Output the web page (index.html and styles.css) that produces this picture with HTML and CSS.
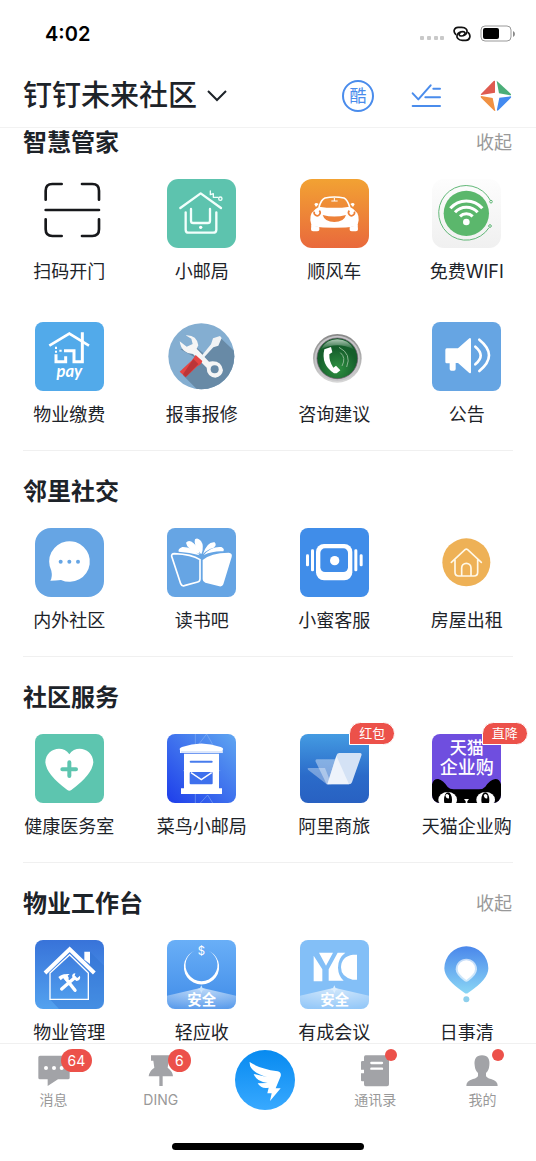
FILE: index.html
```html
<!DOCTYPE html>
<html lang="zh-CN">
<head>
    <meta charset="utf-8">
    <meta name="viewport" content="width=device-width, initial-scale=1.0">
    <title>钉钉未来社区</title>
    <link rel="stylesheet" href="styles.css">
</head>
<body>
<header class="header">
    <div class="statusBar">
        <span class="time">4:02</span>
        <svg class="signal" viewBox="0 0 25 16"><g fill="#c9c9c9"><rect x="0" y="10" width="4" height="4" rx="1"/><rect x="7" y="10" width="4" height="4" rx="1"/><rect x="14" y="10" width="4" height="4" rx="1"/><rect x="20" y="10" width="4" height="4" rx="1"/></g></svg>
        <svg class="chain" viewBox="0 0 54 48"><g fill="none" stroke="#111" stroke-width="5" stroke-linecap="round"><path d="M8 25C-1 16 4 4 15 4H26C38 4 45 12 41 21C38 28 33 30 25 30C18 30 16 24 21 21"/><path d="M46 20C55 29 50 43 39 43H28C16 43 9 34 13 26C16 19 22 17 30 17C37 17 38 23 33 26"/></g></svg>
        <svg class="battery" viewBox="0 0 36 18"><rect x="1" y="1" width="30" height="15" rx="4" fill="none" stroke="#999" stroke-width="1"/><rect x="3" y="3" width="16" height="11" rx="2"/><path d="M33 6Q35 7 35 9T33 12Z" fill="#888"/></svg>
    </div>
    <div class="titleBar">
        <button class="orgBtn" type="button">钉钉未来社区
            <svg class="arrow" viewBox="0 0 20 12"><path d="M1 1L10 10L19 1" fill="none" stroke="#1d2329" stroke-width="2"/></svg>
        </button>
        <nav class="tools">
            <a href="#ku" class="kuBtn">酷</a>
            <a href="#todo" aria-label="待办"><svg viewBox="0 0 96 96"><path d="M5 40L22 58L59 16M67 26H87M43 52H87M5 78H87" fill="none" stroke="#4a8cec" stroke-width="6" stroke-linecap="round" stroke-linejoin="round"/></svg></a>
            <a href="#discover" aria-label="发现"><svg viewBox="0 0 96 96"><path d="M45 2V38L4 45Q1 45 3 42L41 3Z" fill="#df5b50"/><path d="M50 2L92 41Q95 46 90 46L57 40Z" fill="#4bae78"/><path d="M4 48L38 54L46 92Q45 95 41 91L3 53Q0 49 4 48Z" fill="#f09143"/><path d="M58 53L92 49Q95 51 92 54L55 91Q50 95 51 88Z" fill="#438af0"/></svg></a>
        </nav>
    </div>
</header>

<main class="content">
    <section class="group">
        <div class="groupHead"><h2>智慧管家</h2><button type="button" class="foldBtn">收起</button></div>
        <div class="apps">
            <a class="app" href="#scan">
                <svg class="icon" viewBox="0 0 207 207"><path d="M32 62V35Q32 15 52 15H80M141 15H172Q192 15 192 35V62M32 121V151Q32 171 52 171H80M141 171H172Q192 171 192 151V121M32 93H192" fill="none" stroke="#17181b" stroke-width="8" stroke-linecap="round"/></svg>
                <span>扫码开门</span>
            </a>
            <a class="app" href="#post">
                <svg class="icon" viewBox="0 0 207 207"><rect width="207" height="207" rx="34" fill="#5dc3ae"/><g fill="none" stroke="#f2fffc" stroke-width="7" stroke-linecap="round" stroke-linejoin="round"><path d="M40 87L101 43L162 87"/><path d="M56 100V152Q56 161 65 161H138Q148 161 148 152V100M72 90V125Q72 132 79 132H122Q129 132 129 125V90"/><path d="M130 36V47L139 44V55L153 55" stroke-width="4"/><circle cx="160" cy="59" r="5" stroke-width="4"/></g><circle cx="101" cy="145" r="5" fill="#fff"/></svg>
                <span>小邮局</span>
            </a>
            <a class="app" href="#car">
                <svg class="icon" viewBox="0 0 207 207"><defs><linearGradient id="orange" x2="0" y2="1"><stop stop-color="#f2a233"/><stop offset="1" stop-color="#e9693c"/></linearGradient></defs><rect width="207" height="207" rx="36" fill="url(#orange)"/><path d="M57 84Q64 61 75 57Q103 51 132 57Q142 61 149 84" fill="none" stroke="#fff" stroke-width="5"/><path d="M103 57V66M94 66H113" stroke="#fff" stroke-width="3"/><g fill="#fff"><path d="M31 124Q28 98 57 83Q103 90 149 83Q179 98 176 124L172 142Q103 151 35 142Z"/><path d="M48 84L43 76Q47 69 56 75ZM159 84L164 76Q160 69 151 75Z"/><path d="M34 138L58 145V153Q57 157 51 157H39Q33 157 33 151ZM173 138L149 145V153Q150 157 156 157H168Q174 157 174 151Z"/></g><path d="M68 108Q103 117 138 108Q132 129 103 129Q74 129 68 108" fill="#ed8139"/><g fill="none" stroke="#ed8139" stroke-width="5"><path d="M43 98A9 9 0 1 0 58 95M148 95A9 9 0 1 0 163 98"/></g></svg>
                <span>顺风车</span>
            </a>
            <a class="app" href="#wifi">
                <svg class="icon" viewBox="0 0 207 207"><defs><linearGradient id="paper" x2="0" y2="1"><stop stop-color="#fdfdfd"/><stop offset="1" stop-color="#f0f0f0"/></linearGradient></defs><rect width="207" height="207" rx="36" fill="url(#paper)"/><g fill="none" stroke="#62b878" stroke-width="3"><path d="M175 64A82 82 0 1 0 171 146"/><circle cx="177" cy="68" r="4"/><circle cx="174" cy="141" r="4"/></g><circle cx="103" cy="103" r="68" fill="#5bb76c"/><path d="M55 88A63 63 0 0 1 151 88M69 100A45 45 0 0 1 137 100M84 112A27 27 0 0 1 122 112" fill="none" stroke="#fff" stroke-width="9"/><circle cx="103" cy="129" r="10" fill="#fff"/></svg>
                <span>免费WIFI</span>
            </a>
            <a class="app" href="#pay">
                <svg class="icon" viewBox="0 0 207 207"><rect width="207" height="207" rx="24" fill="#52aaea"/><g fill="none" stroke="#fff" stroke-width="8"><path d="M43 71L103 35L162 71"/><path d="M142 31V119H117V86H87" stroke-width="9"/><path d="M63 97V119H92V103" stroke-width="9"/><path d="M63 74V81M63 86V92M73 86H80" stroke-width="6"/></g><text class="payText" x="103" y="166">pay</text></svg>
                <span>物业缴费</span>
            </a>
            <a class="app" href="#repair">
                <svg class="icon" viewBox="0 0 207 207"><defs><clipPath id="disc"><circle cx="103" cy="103" r="99"/></clipPath></defs><g clip-path="url(#disc)"><rect width="207" height="207" fill="#84aed1"/><path d="M160 47L207 92V207H95L48 160L92 110L40 82L80 70L112 96Z" fill="#688aa6"/></g><path d="M56 40Q89 38 94 70L89 80L126 119Q163 113 168 145Q165 165 145 167Q119 163 119 137L78 96Q43 94 38 58L59 74L77 66L73 50Z" fill="#f5f5f5"/><circle cx="143" cy="142" r="12" fill="#688aa6"/><path d="M99 107L132 67L138 49L159 42L164 48L154 71L139 76L106 112Z" fill="#f1f3f4"/><path d="M86 99L106 117Q103 128 91 133L56 166L38 149L75 115Z" fill="#e44543"/><path d="M79 111L94 126L56 165L48 157Z" fill="#bb3538"/></svg>
                <span>报事报修</span>
            </a>
            <a class="app" href="#advice">
                <svg class="icon" viewBox="0 0 207 207"><defs><linearGradient id="silver" x2="0" y2="1"><stop stop-color="#888"/><stop offset="1" stop-color="#d8d8d8"/></linearGradient><radialGradient id="green" cy=".75"><stop stop-color="#2f9142"/><stop offset="1" stop-color="#155e2b"/></radialGradient><linearGradient id="gloss" x2="0" y2="1"><stop stop-color="#fff" stop-opacity=".65"/><stop offset="1" stop-color="#fff" stop-opacity=".05"/></linearGradient></defs><circle cx="112" cy="109" r="73" fill="url(#silver)"/><circle cx="112" cy="109" r="68" fill="#c6c5c8"/><circle cx="112" cy="109" r="61" fill="url(#green)" stroke="#656" stroke-width="2"/><path d="M63 82A55 55 0 0 1 161 82Q112 57 63 82" fill="url(#gloss)"/><path d="M82 79L93 75L97 91L88 97Q87 119 100 137L108 131L121 145L110 154H102Q62 128 73 82Z" fill="#fff"/><path d="M121 92Q139 107 126 132M117 76Q156 96 140 135" fill="none" stroke="#8bb692" stroke-width="3"/></svg>
                <span>咨询建议</span>
            </a>
            <a class="app" href="#notice">
                <svg class="icon" viewBox="0 0 207 207"><rect width="207" height="207" rx="24" fill="#66a5e3"/><path d="M44 79H78L112 49Q117 46 117 53V150Q117 157 111 152L78 123H71V141Q71 146 66 146H58Q53 146 53 141V124H44Q40 124 40 119V84Q40 79 44 79" fill="#fff"/><path d="M130 74Q162 101 130 127M142 53Q200 100 142 147" fill="none" stroke="#fff" stroke-width="8" stroke-linecap="round"/></svg>
                <span>公告</span>
            </a>
        </div>
    </section>

    <section class="group">
        <div class="groupHead"><h2>邻里社交</h2></div>
        <div class="apps">
            <a class="app" href="#community">
                <svg class="icon" viewBox="0 0 207 207"><rect width="207" height="207" rx="48" fill="#66a5e4"/><path d="M46 158Q53 146 49 128A61 61 0 1 1 78 156Q62 158 46 158" fill="#fff"/><g fill="#66a5e4"><circle cx="77" cy="101" r="6"/><circle cx="103" cy="101" r="6"/><circle cx="129" cy="101" r="6"/></g></svg>
                <span>内外社区</span>
            </a>
            <a class="app" href="#books">
                <svg class="icon" viewBox="0 0 207 207"><rect width="207" height="207" rx="24" fill="#66a5e4"/><path d="M14 85Q13 77 22 77Q74 79 99 95V153Q99 160 92 162L52 173Q44 175 41 167Z" fill="none" stroke="#fff" stroke-width="5"/><path d="M107 96Q130 75 185 74Q197 75 194 87L169 169Q166 177 157 175L115 164Q107 162 107 154Z" fill="#fff"/><g fill="#fff"><path d="M101 77Q78 51 84 34Q92 27 102 39Q112 53 104 77Z"/><path d="M98 78Q60 65 57 44Q66 33 80 46Q95 59 98 78"/><path d="M98 82Q73 56 46 57Q32 62 35 71Q68 73 98 82"/><path d="M108 78Q121 40 143 43Q151 52 139 60Q122 64 108 78"/><path d="M110 81Q133 54 163 57Q174 62 169 70Q140 68 110 81"/></g></svg>
                <span>读书吧</span>
            </a>
            <a class="app" href="#service">
                <svg class="icon" viewBox="0 0 207 207"><rect width="207" height="207" rx="24" fill="#408de9"/><rect x="48" y="48" width="109" height="109" rx="24" fill="#fff"/><rect x="61" y="61" width="83" height="71" rx="14" fill="#408de9"/><circle cx="104" cy="98" r="14" fill="#fff"/><g fill="#fff"><rect x="33" y="64" width="9" height="66" rx="4"/><rect x="18" y="79" width="9" height="36" rx="4"/><rect x="163" y="64" width="9" height="66" rx="4"/><rect x="179" y="79" width="9" height="36" rx="4"/></g></svg>
                <span>小蜜客服</span>
            </a>
            <a class="app" href="#rent">
                <svg class="icon" viewBox="0 0 207 207"><circle cx="103" cy="103" r="72" fill="#eeb156"/><path d="M58 103L99 65Q103 62 107 65L148 103M69 95V133Q69 144 80 144H126Q137 144 137 133V95M89 144V120A14 14 0 0 1 117 120V144" fill="none" stroke="#fff8e7" stroke-width="5" stroke-linecap="round"/></svg>
                <span>房屋出租</span>
            </a>
        </div>
    </section>

    <section class="group">
        <div class="groupHead"><h2>社区服务</h2></div>
        <div class="apps">
            <a class="app" href="#health">
                <svg class="icon" viewBox="0 0 207 207"><rect width="207" height="207" rx="24" fill="#5dc5af"/><path d="M97 168Q34 122 31 85C32 44 83 30 103 61C123 30 174 44 175 85Q172 122 109 168Q103 172 97 168" fill="#fff"/><path d="M103 85V126M82 106H123" stroke="#5dc5af" stroke-width="12" stroke-linecap="round"/></svg>
                <span>健康医务室</span>
            </a>
            <a class="app" href="#cainiao">
                <svg class="icon" viewBox="0 0 207 207"><defs><linearGradient id="blue" x1="0" y1="1" x2="1" y2="0"><stop stop-color="#1d3dea"/><stop offset="1" stop-color="#60a6f1"/></linearGradient></defs><rect width="207" height="207" rx="24" fill="url(#blue)"/><path d="M85 0V38M92 35L119 0L139 35M85 180V207M100 207L122 183L137 207M48 110H160" fill="none" stroke="#91b9f6" stroke-opacity=".5" stroke-width="3"/><g fill="#fff"><path d="M39 48Q35 43 45 39Q103 18 161 39Q172 43 167 48V57H39Z"/><path d="M51 59H156V163H165V180H42V163H51Z"/></g><path d="M42 54H165" stroke="#9cb8f3" stroke-width="2"/><path d="M71 83H134" stroke="#477ced" stroke-width="6" stroke-linecap="round"/><rect x="68" y="114" width="69" height="37" rx="3" fill="#3e70ed"/><path d="M72 116L103 137L134 116" fill="none" stroke="#fff" stroke-width="4"/></svg>
                <span>菜鸟小邮局</span>
            </a>
            <a class="app" href="#travel">
                <svg class="icon" viewBox="0 0 207 207"><defs><linearGradient id="sky" x2="0" y2="1"><stop stop-color="#449be2"/><stop offset=".6" stop-color="#2b6bc9"/><stop offset="1" stop-color="#2861c2"/></linearGradient></defs><rect width="207" height="207" rx="24" fill="url(#sky)"/><path d="M25 102H75L94 151H80L24 107Q21 103 25 102" fill="#fff" fill-opacity=".35"/><path d="M50 76H107L87 151H80L47 83Q45 77 50 76" fill="#fff" fill-opacity=".4"/><path d="M118 57H179Q187 57 184 65L156 145Q154 151 147 151H82L110 63Q112 57 118 57" fill="#d4e2f5"/><path d="M109 65L147 151H82Z" fill="#fff" fill-opacity=".6"/></svg>
                <span>阿里商旅</span>
                <em class="tag">红包</em>
            </a>
            <a class="app" href="#tmall">
                <svg class="icon" viewBox="0 0 207 207"><defs><clipPath id="tile"><rect width="207" height="207" rx="24"/></clipPath></defs><g clip-path="url(#tile)"><rect width="207" height="207" fill="#6f4edf"/><path d="M0 207V151Q4 134 19 135Q33 138 47 159Q53 166 65 166H141Q153 166 160 158Q174 137 190 135Q203 135 207 151V207Z" fill="#000"/><ellipse cx="47" cy="197" rx="28" ry="23" fill="#fff"/><ellipse cx="161" cy="197" rx="28" ry="23" fill="#fff"/><ellipse cx="48" cy="197" rx="12" ry="22"/><ellipse cx="160" cy="197" rx="12" ry="22"/><path d="M40 185Q43 175 51 184V193Q44 196 40 185M155 185Q158 175 166 184V193Q159 196 155 185M96 195H111L106 202V207H101V202Z" fill="#fff"/></g><text class="catText" x="104" y="59">天猫</text><text class="catText catSub" x="104" y="120">企业购</text></svg>
                <span>天猫企业购</span>
                <em class="tag">直降</em>
            </a>
        </div>
    </section>

    <section class="group">
        <div class="groupHead"><h2>物业工作台</h2><button type="button" class="foldBtn">收起</button></div>
        <div class="apps">
            <a class="app" href="#manage">
                <svg class="icon" viewBox="0 0 207 207"><defs><linearGradient id="deep" x2="0" y2="1"><stop stop-color="#3873d9"/><stop offset="1" stop-color="#53a2ef"/></linearGradient></defs><rect width="207" height="207" rx="24" fill="url(#deep)"/><path d="M165 35L207 77V183Q207 207 183 207H72L45 178L160 178Z" fill="#2f70d0" fill-opacity=".4"/><path d="M148 35H165V72L148 59Z" fill="#fff"/><path d="M30 99L104 28L178 99" fill="none" stroke="#fff" stroke-width="12"/><path d="M45 99V178H160V99L104 44Z" fill="none" stroke="#fff" stroke-width="4"/><path d="M80 147L119 113M87 109L120 151" stroke="#fff" stroke-width="10" stroke-linecap="round"/><path d="M70 111Q82 100 104 102L98 107L102 115L92 122L85 114L77 121ZM112 112Q109 101 121 100L119 109L127 114L135 107Q138 121 124 123Z" fill="#fff"/></svg>
                <span>物业管理</span>
            </a>
            <a class="app" href="#receivable">
                <svg class="icon" viewBox="0 0 207 207"><defs><linearGradient id="light" x2="0" y2="1"><stop stop-color="#69aff7"/><stop offset="1" stop-color="#418ce8"/></linearGradient><radialGradient id="fan" cy="0" r="1"><stop stop-color="#fff" stop-opacity=".65"/><stop offset="1" stop-color="#fff" stop-opacity=".15"/></radialGradient></defs><rect width="207" height="207" rx="24" fill="url(#light)"/><path d="M88 30A53 53 0 1 0 119 30A48 48 0 1 1 88 30" fill="#fff"/><text class="dollar" x="103" y="45">$</text><path d="M0 167L103 143L207 167V183Q207 207 183 207H24Q0 207 0 183Z" fill="url(#fan)"/><path d="M103 136L107 145L116 148L107 151L103 160L99 151L90 148L99 145Z" fill="#c9e3fc"/><text class="safe" x="104" y="194">安全</text></svg>
                <span>轻应收</span>
            </a>
            <a class="app" href="#meeting">
                <svg class="icon" viewBox="0 0 207 207"><rect width="207" height="207" rx="24" fill="#83bff7"/><path d="M41 47L67 88V124H41ZM57 38H99L78 77ZM86 88L113 38H136Q114 54 114 83Q115 108 131 122H86ZM171 44V119H158Q123 111 123 82Q124 49 159 44Z" fill="#fff"/><path d="M0 167L103 143L207 167V183Q207 207 183 207H24Q0 207 0 183Z" fill="url(#fan)"/><path d="M103 136L107 145L116 148L107 151L103 160L99 151L90 148L99 145Z" fill="#deeffe"/><text class="safe" x="104" y="194">安全</text></svg>
                <span>有成会议</span>
            </a>
            <a class="app" href="#daily">
                <svg class="icon" viewBox="0 0 207 207"><defs><linearGradient id="pin" x2="0" y2="1"><stop stop-color="#4a87eb"/><stop offset="1" stop-color="#8ad6f5"/></linearGradient></defs><path d="M97 158Q37 119 37 85A66 66 0 1 1 169 85Q169 119 109 158Q103 163 97 158" fill="url(#pin)"/><path d="M97 123Q71 104 71 88A32 32 0 1 1 135 88Q135 104 109 123Q103 127 97 123" fill="#fff" fill-opacity=".65"/><path d="M103 120Q77 102 77 87A26 26 0 1 1 129 87Q129 102 103 120" fill="#fff"/><circle cx="103" cy="178" r="9" fill="#8ecfec"/></svg>
                <span>日事清</span>
            </a>
        </div>
    </section>
</main>

<footer class="footer">
    <nav class="tabs">
        <a class="tab" href="#msg">
            <svg class="tabIcon" viewBox="0 0 96 96"><path d="M6 2H90Q95 2 95 7V68Q95 73 90 73H60L29 93V73H6Q1 73 1 68V7Q1 2 6 2" fill="#a2a3a7"/><g fill="#fff"><circle cx="24" cy="39" r="6"/><circle cx="48" cy="39" r="6"/><circle cx="71" cy="39" r="6"/></g></svg>
            <span>消息</span><b class="count">64</b>
        </a>
        <a class="tab" href="#ding">
            <svg class="tabIcon" viewBox="0 0 96 96"><path d="M18 1H78V17H71L68 38Q83 49 84 64H53V93H43V64H11Q13 47 28 38L25 17H18Z" fill="#a2a3a7"/></svg>
            <span>DING</span><b class="count">6</b>
        </a>
        <a class="tab" href="#work" aria-label="工作台">
            <svg class="dingIcon" viewBox="0 0 195 180"><defs><linearGradient id="ding" x2="0" y2="1"><stop stop-color="#078af0"/><stop offset="1" stop-color="#38a9ff"/></linearGradient></defs><circle cx="90" cy="90" r="90" fill="url(#ding)"/><path d="M44 36Q70 55 128 64Q140 67 137 79L122 115H137L105 153L110 130H97L101 113Q79 118 68 100L98 99Q65 96 56 72L96 81Q42 66 44 36" fill="#fff"/></svg>
        </a>
        <a class="tab" href="#contacts">
            <svg class="tabIcon" viewBox="0 0 96 96"><path d="M20 1H84Q90 1 90 7V88Q90 94 84 94H20Q15 94 15 88V79H9Q6 79 6 76V55H15V44H6V22Q6 18 10 18H15V7Q15 1 20 1" fill="#a2a3a7"/><path d="M37 24H69M37 41H69" stroke="#fff" stroke-width="7" stroke-linecap="round"/></svg>
            <span>通讯录</span><b class="dot"></b>
        </a>
        <a class="tab" href="#mine">
            <svg class="tabIcon" viewBox="0 0 96 96"><path d="M48 1C66 1 72 13 70 31Q69 46 60 54V62Q61 68 75 72Q96 78 95 93H1Q0 78 21 72Q35 68 36 62V54Q27 46 26 31C24 13 30 1 48 1" fill="#a2a3a7"/></svg>
            <span>我的</span><b class="dot"></b>
        </a>
    </nav>
    <div class="homeBar"></div>
</footer>
</body>
</html>
```
FILE: styles.css
```css
*{
    box-sizing: border-box;
}
body{
    margin: 0; height: 100vh;
    display: flex; flex-direction: column;
    background-color: #fff; color: #1d2329;
    font-family: Inter, "Noto Sans CJK SC", sans-serif;
}
a{
    color: inherit; text-decoration: none;
}
button{
    padding: 0; border: 0; background: none; font-family: inherit; cursor: pointer;
}
svg{
    display: block; flex: none;
}
.header{
    flex: none; border-bottom: 1px solid #f2f2f2;
}
.statusBar{
    height: 64px; padding: 4px 20px 0 45px;
    display: flex; align-items: center;
}
.time{
    margin-right: auto; font-size: 20px; font-weight: 600; color: #000;
}
.signal{
    width: 25px; height: 16px;
}
.chain{
    width: 18px; height: 16px; margin: 0 9px 0 8px;
}
.battery{
    width: 36px; height: 18px;
}
.titleBar{
    height: 63px; padding: 0 24px 0 23px;
    display: flex; align-items: center; justify-content: space-between;
}
.orgBtn{
    display: flex; align-items: center; gap: 10px;
    color: #1d2329; font-size: 29px; line-height: 40px; font-weight: 500;
}
.arrow{
    width: 20px; height: 12px;
}
.tools{
    display: flex; gap: 37px;
}
.tools svg, .kuBtn{
    width: 32px; height: 32px;
}
.kuBtn{
    border: 2px solid #4a8cec; border-radius: 50%;
    color: #4a8cec; font-size: 17px; line-height: 28px; text-align: center;
}

/* 应用分组 */
.content{
    flex: 1; min-height: 0; overflow-y: auto; scrollbar-width: none;
}
.group{
    padding: 28px 3px 23px;
}
.group:first-child{
    padding-top: 1px;
}
.group + .group{
    position: relative;
}
.group + .group::before{
    content: ""; position: absolute; top: 0; left: 23px; right: 23px;
    height: 1px; background-color: #f0f0f0;
}
.groupHead{
    display: flex; justify-content: space-between; align-items: center;
    height: 28px; margin: 0 21px 22px 20px;
}
.groupHead h2{
    margin: 0; font-size: 24px; line-height: 28px; font-weight: 600;
}
.foldBtn{
    color: #999; font-size: 18px; line-height: 28px;
}
.apps{
    display: grid; grid-template-columns: repeat(4, 1fr); row-gap: 38px;
}
.app{
    position: relative;
    display: flex; flex-direction: column; align-items: center; gap: 12px;
    font-size: 18px; line-height: 24px; white-space: nowrap;
}
.icon{
    width: 69px; height: 69px;
}
.tag{
    position: absolute; top: -12px; left: calc(50% + 15px);
    padding: 0 9px; border: 1px solid #fff; border-radius: 12px 12px 12px 0;
    background-color: #ec514a; color: #fff;
    font-size: 13px; line-height: 21px; font-style: normal;
}
.payText{
    font-family: Lato, sans-serif; font-size: 50px; font-weight: 700; font-style: italic; text-anchor: middle; fill: #fff;
}
.catText{
    font-size: 51px; text-anchor: middle; font-weight: 500; fill: #fff;
}
.catSub{
    font-size: 54px;
}
.safe{
    font-size: 43px; font-weight: 700; text-anchor: middle; fill: #fff;
}
.dollar{
    font-size: 34px; text-anchor: middle; fill: #fff;
}

/* 底部导航 */
.footer{
    flex: none; height: 118px; border-top: 1px solid #f0f0f0;
}
.tabs{
    height: 99px;
    display: grid; grid-template-columns: repeat(5, 1fr);
}
.tab{
    position: relative; padding-top: 11px;
    display: flex; flex-direction: column; align-items: center; gap: 3px;
    color: #999; font-size: 14px; line-height: 20px;
}
.tabIcon{
    width: 32px; height: 32px;
}
.dingIcon{
    width: 65px; height: 60px; margin-top: -5px;
}
.count{
    position: absolute; top: 5px; left: calc(50% + 7px);
    min-width: 23px; padding: 0 7px; border-radius: 12px;
    background-color: #ec514a; color: #fff;
    font-size: 14px; line-height: 23px; font-weight: 400; text-align: center;
}
.dot{
    position: absolute; top: 5px; left: calc(50% + 10px);
    width: 12px; height: 12px; border-radius: 50%; background-color: #ec514a;
}
.homeBar{
    width: 36%; height: 7px; margin: 0 auto; border-radius: 4px; background-color: #000;
}
```
